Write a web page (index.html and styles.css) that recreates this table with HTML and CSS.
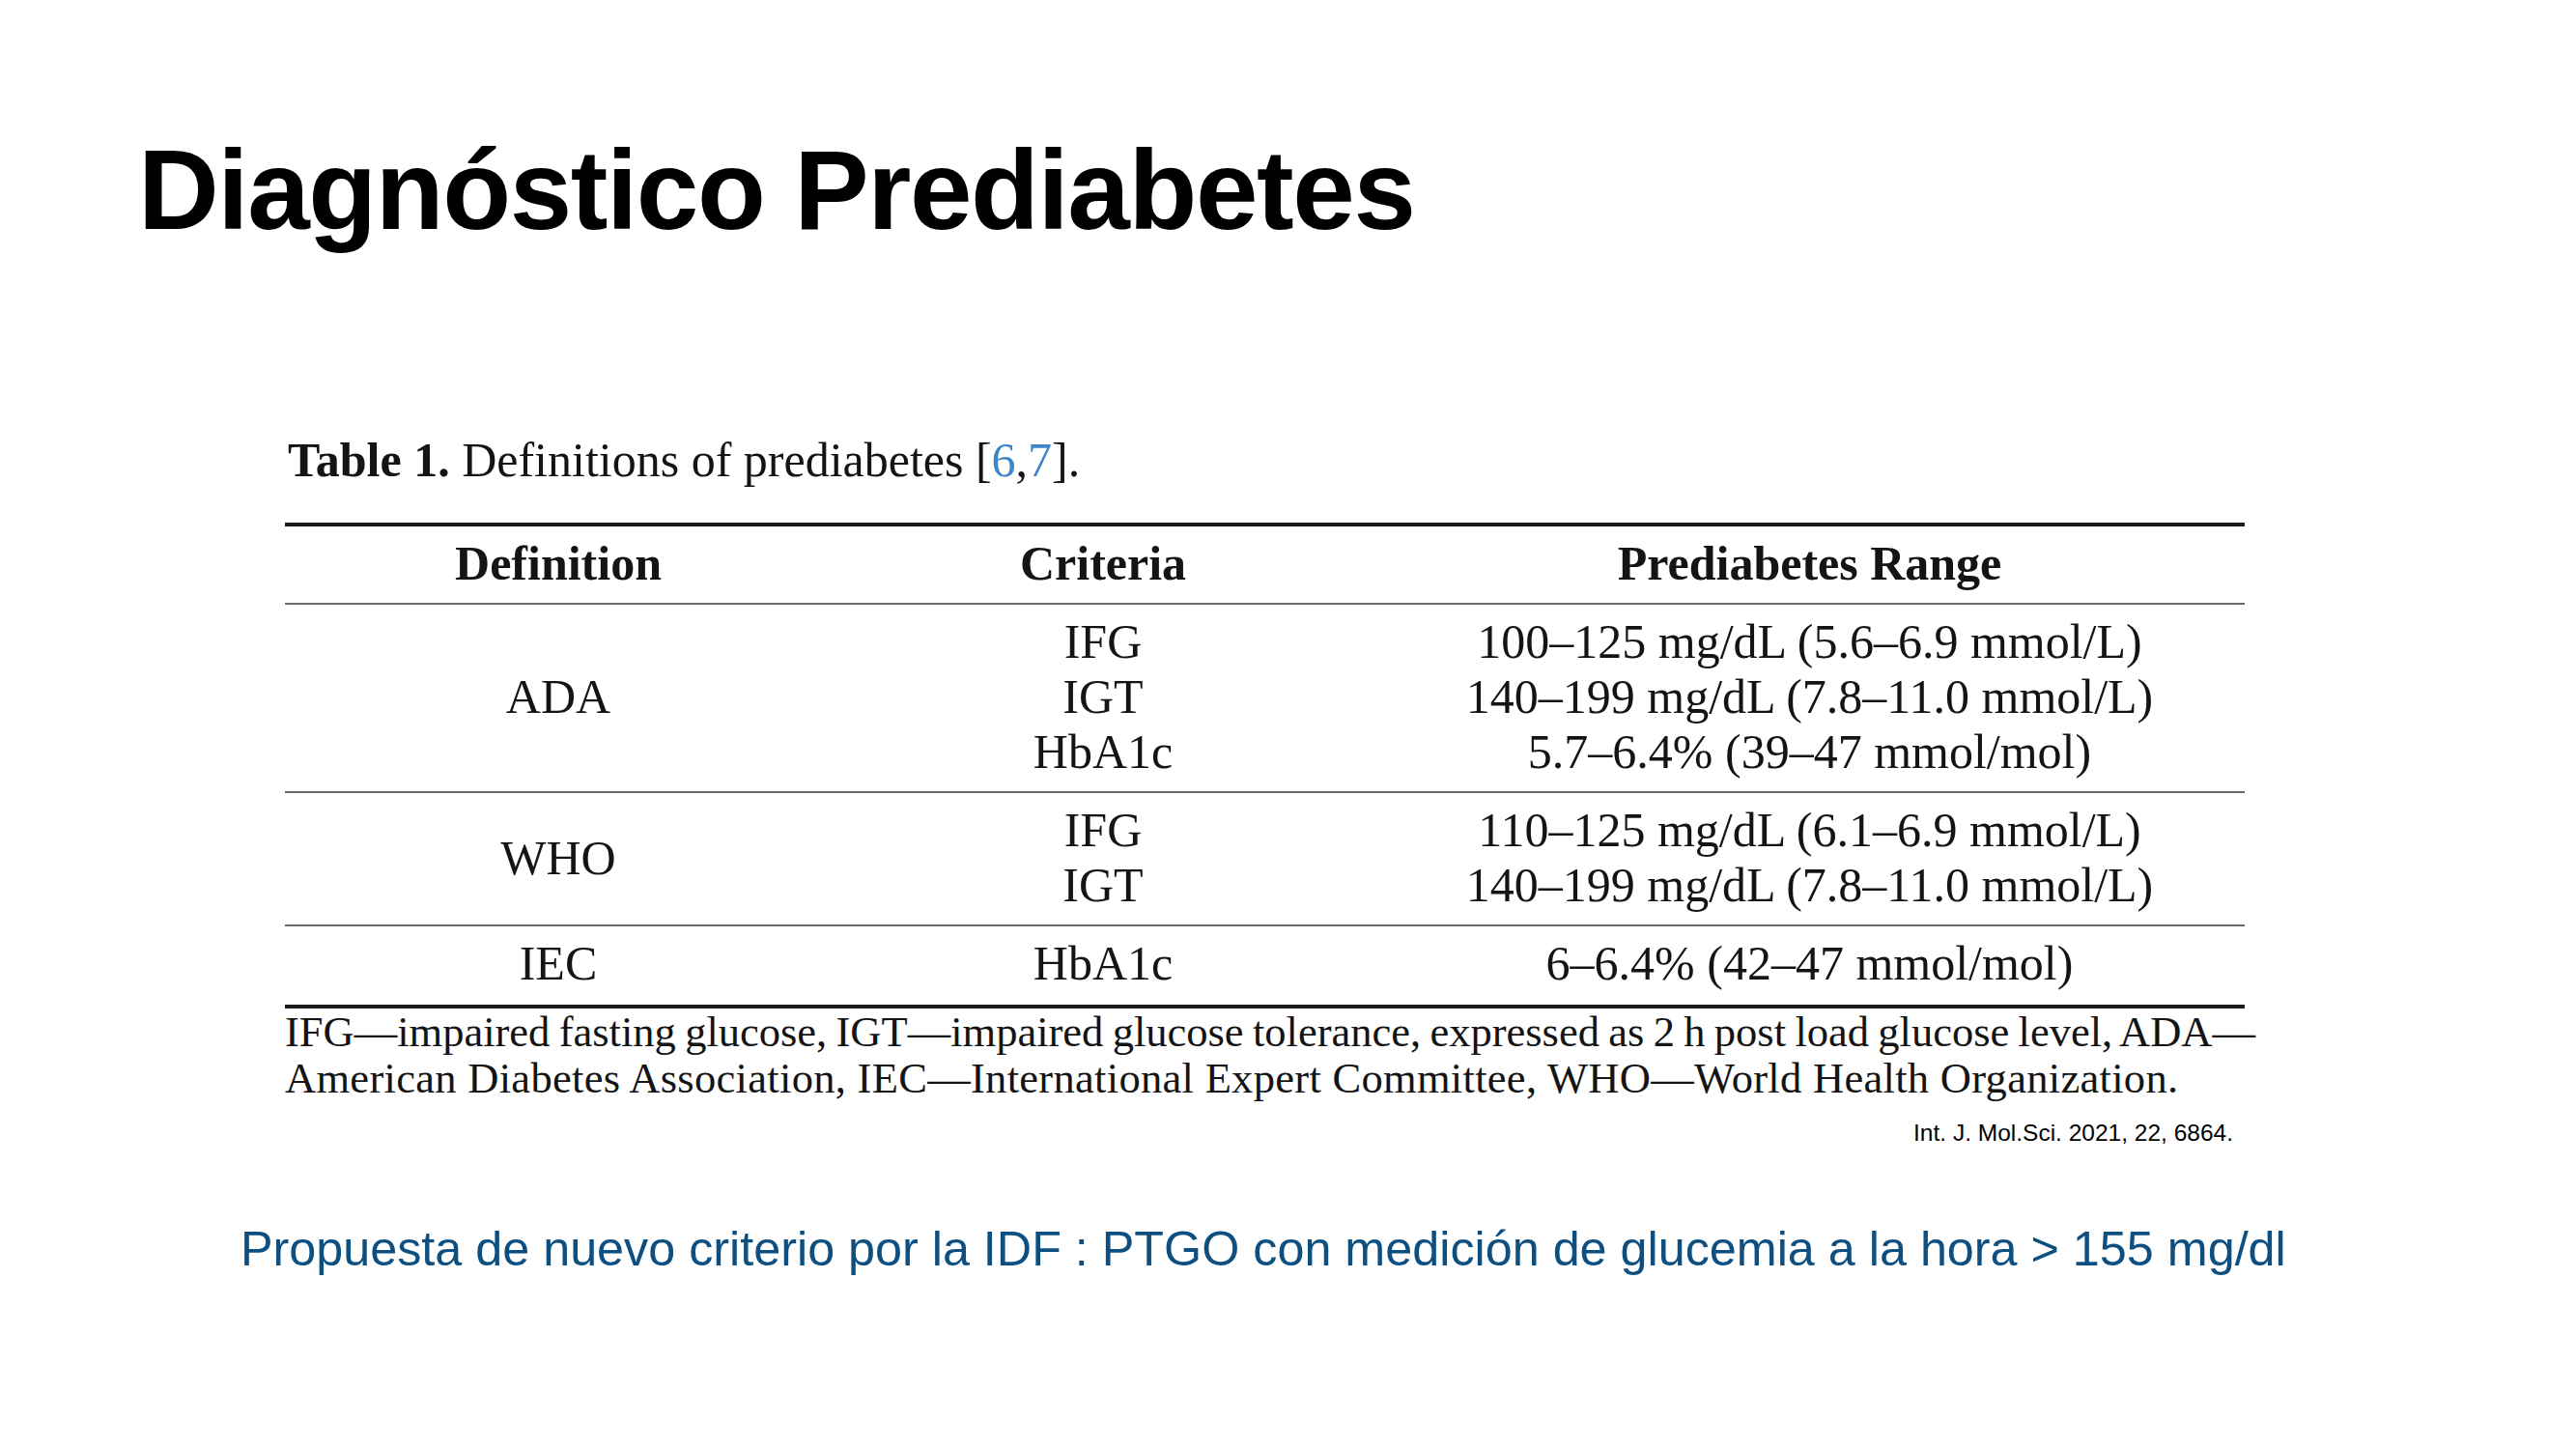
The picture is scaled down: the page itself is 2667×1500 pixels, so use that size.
FILE: index.html
```html
<!DOCTYPE html>
<html lang="es">
<head>
<meta charset="utf-8">
<title>Diagnóstico Prediabetes</title>
<link rel="stylesheet" href="styles.css">
</head>
<body>
<div class="slide">
  <h1 class="title">Diagnóstico Prediabetes</h1>
  <div class="figure">
    <p class="caption"><b>Table 1.</b> Definitions of prediabetes [<span class="ref">6</span>,<span class="ref">7</span>].</p>
    <div class="table">
      <div class="row head">
        <div class="cell">Definition</div>
        <div class="cell">Criteria</div>
        <div class="cell">Prediabetes Range</div>
      </div>
      <div class="row">
        <div class="cell">ADA</div>
        <div class="cell">IFG<br>IGT<br>HbA1c</div>
        <div class="cell">100–125 mg/dL (5.6–6.9 mmol/L)<br>140–199 mg/dL (7.8–11.0 mmol/L)<br>5.7–6.4% (39–47 mmol/mol)</div>
      </div>
      <div class="row">
        <div class="cell">WHO</div>
        <div class="cell">IFG<br>IGT</div>
        <div class="cell">110–125 mg/dL (6.1–6.9 mmol/L)<br>140–199 mg/dL (7.8–11.0 mmol/L)</div>
      </div>
      <div class="row last">
        <div class="cell">IEC</div>
        <div class="cell">HbA1c</div>
        <div class="cell">6–6.4% (42–47 mmol/mol)</div>
      </div>
    </div>
    <div class="foot">
      <span class="l1">IFG—impaired fasting glucose, IGT—impaired glucose tolerance, expressed as 2 h post load glucose level, ADA&#8288;—</span>
      <span class="l2">American Diabetes Association, IEC—International Expert Committee, WHO—World Health Organization.</span>
    </div>
    <div class="cite">Int. J. Mol.Sci. 2021, 22, 6864.</div>
  </div>
  <p class="note">Propuesta de nuevo criterio por la IDF : PTGO con medición de glucemia a la hora &gt; 155 mg/dl</p>
</div>
</body>
</html>
```

FILE: styles.css
```css
html, body {
  margin: 0;
  padding: 0;
  background: #ffffff;
}

.slide {
  width: 2667px;
  height: 1500px;
  overflow: hidden;
  background: #ffffff;
}

.title {
  margin: 132px 0 0 143px;
  font-family: "Liberation Sans", Arial, sans-serif;
  font-weight: 700;
  font-size: 116px;
  line-height: 130px;
  letter-spacing: -1.4px;
  color: #000000;
}

.figure {
  margin: 186px 0 0 295px;
  width: 2029px;
  font-family: "Liberation Serif", "Times New Roman", serif;
  color: #141414;
}

.caption {
  margin: 0 0 36px 3px;
  font-size: 50px;
  line-height: 57px;
}

.caption b {
  font-weight: 700;
}

.ref {
  color: #3f86c8;
}

.table {
  border-top: 4px solid #1c1c1c;
  border-bottom: 4px solid #1c1c1c;
}

.row {
  display: grid;
  grid-template-columns: 566px 562px 901px;
  align-items: center;
  padding: 10px 0 12px;
  border-bottom: 2px solid #6a6a6a;
  font-size: 50px;
  line-height: 57px;
  text-align: center;
}

.row.head {
  font-weight: 700;
}

.row.last {
  border-bottom: none;
  padding-bottom: 14px;
}

.cell {
  white-space: nowrap;
}

.foot {
  width: 2040px;
  font-size: 44.5px;
  line-height: 48px;
  color: #141414;
}

.foot .l1 {
  display: block;
  text-align: justify;
  text-align-last: justify;
  word-spacing: -5px;
}

.foot .l2 {
  display: block;
  text-align: left;
  letter-spacing: 0.3px;
}

.cite {
  margin-top: 19px;
  padding-right: 12px;
  text-align: right;
  font-family: "Liberation Sans", Arial, sans-serif;
  font-size: 24.5px;
  line-height: 28px;
  color: #000000;
}

.note {
  margin: 78px 0 0 249px;
  font-family: "Liberation Sans", Arial, sans-serif;
  font-size: 50.3px;
  line-height: 56px;
  color: #0c4f80;
}
```
